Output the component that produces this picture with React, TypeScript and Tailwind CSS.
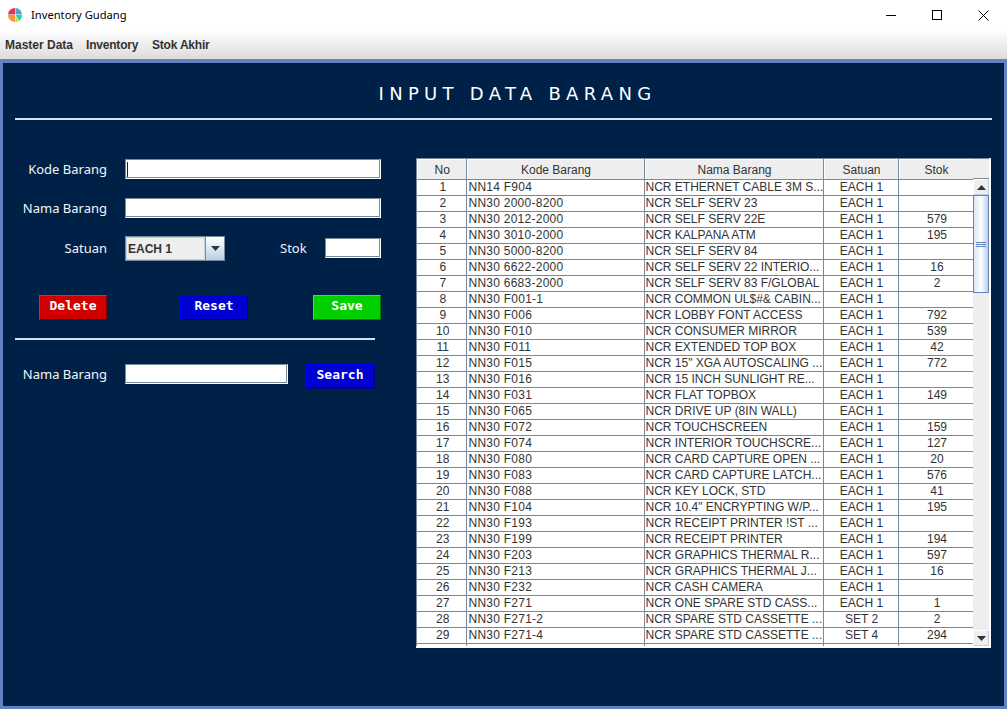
const ROWS: [number, string, string, string, string][] = [
  [1, 'NN14 F904', 'NCR ETHERNET CABLE 3M S...', 'EACH 1', ''],
  [2, 'NN30 2000-8200', 'NCR SELF SERV 23', 'EACH 1', ''],
  [3, 'NN30 2012-2000', 'NCR SELF SERV 22E', 'EACH 1', '579'],
  [4, 'NN30 3010-2000', 'NCR KALPANA ATM', 'EACH 1', '195'],
  [5, 'NN30 5000-8200', 'NCR SELF SERV 84', 'EACH 1', ''],
  [6, 'NN30 6622-2000', 'NCR SELF SERV 22 INTERIO...', 'EACH 1', '16'],
  [7, 'NN30 6683-2000', 'NCR SELF SERV 83 F/GLOBAL', 'EACH 1', '2'],
  [8, 'NN30 F001-1', 'NCR COMMON UL$#& CABIN...', 'EACH 1', ''],
  [9, 'NN30 F006', 'NCR LOBBY FONT ACCESS', 'EACH 1', '792'],
  [10, 'NN30 F010', 'NCR CONSUMER MIRROR', 'EACH 1', '539'],
  [11, 'NN30 F011', 'NCR EXTENDED TOP BOX', 'EACH 1', '42'],
  [12, 'NN30 F015', 'NCR 15" XGA AUTOSCALING ...', 'EACH 1', '772'],
  [13, 'NN30 F016', 'NCR 15 INCH SUNLIGHT RE...', 'EACH 1', ''],
  [14, 'NN30 F031', 'NCR FLAT TOPBOX', 'EACH 1', '149'],
  [15, 'NN30 F065', 'NCR DRIVE UP (8IN WALL)', 'EACH 1', ''],
  [16, 'NN30 F072', 'NCR TOUCHSCREEN', 'EACH 1', '159'],
  [17, 'NN30 F074', 'NCR INTERIOR TOUCHSCRE...', 'EACH 1', '127'],
  [18, 'NN30 F080', 'NCR CARD CAPTURE OPEN ...', 'EACH 1', '20'],
  [19, 'NN30 F083', 'NCR CARD CAPTURE LATCH...', 'EACH 1', '576'],
  [20, 'NN30 F088', 'NCR KEY LOCK, STD', 'EACH 1', '41'],
  [21, 'NN30 F104', 'NCR 10.4" ENCRYPTING W/P...', 'EACH 1', '195'],
  [22, 'NN30 F193', 'NCR RECEIPT PRINTER !ST ...', 'EACH 1', ''],
  [23, 'NN30 F199', 'NCR RECEIPT PRINTER', 'EACH 1', '194'],
  [24, 'NN30 F203', 'NCR GRAPHICS THERMAL R...', 'EACH 1', '597'],
  [25, 'NN30 F213', 'NCR GRAPHICS THERMAL J...', 'EACH 1', '16'],
  [26, 'NN30 F232', 'NCR CASH CAMERA', 'EACH 1', ''],
  [27, 'NN30 F271', 'NCR ONE SPARE STD CASS...', 'EACH 1', '1'],
  [28, 'NN30 F271-2', 'NCR SPARE STD CASSETTE ...', 'SET 2', '2'],
  [29, 'NN30 F271-4', 'NCR SPARE STD CASSETTE ...', 'SET 4', '294'],
]

const labelClass = "w-[92px] text-right text-[13px] text-[#f2f5fa] font-['Noto_Sans',sans-serif] leading-none"
const inputClass = 'h-[20px] bg-white border border-t-[#7a8a99] border-l-[#7a8a99] border-b-white border-r-white shadow-[inset_-1px_-1px_0_#7a8a99]'
const btnClass = "h-[25px] flex items-center justify-center pb-[3px] text-white font-bold text-[13px] font-['DejaVu_Sans_Mono',monospace] border"
const blueBtn = 'bg-[#0000d0] border-t-[#0000ff] border-l-[#0000ff] border-b-[#000080] border-r-[#000080]'

function AppIcon() {
  return (
    <svg width="16" height="16" viewBox="0 0 16 16">
      <path d="M8 7.5V1A7 7 0 0 0 1 7.5Z" fill="#d83a4c" />
      <path d="M8.5 7.5V1A7 7 0 0 1 15 7.5Z" fill="#4aa8c4" />
      <path d="M8.5 8H15A7 7 0 0 1 12.5 13.7Z" fill="#1fd0b0" />
      <path d="M8.5 8.5L12 13.7A7 7 0 0 1 8.5 15Z" fill="#c4dc3c" />
      <path d="M8 8V15A7 7 0 0 1 1 8Z" fill="#f59a3a" />
    </svg>
  )
}

function ScrollArrow({ down }: { down?: boolean }) {
  return (
    <div className="h-[16px] bg-[#eeeeee] border border-t-white border-l-white border-b-[#b8cfe5] border-r-[#b8cfe5] flex items-center justify-center">
      <svg width="9" height="5" viewBox="0 0 9 5">
        <path d={down ? 'M0 0H9L4.5 5Z' : 'M0 5H9L4.5 0Z'} fill="#333" />
      </svg>
    </div>
  )
}

export default function App() {
  return (
    <div className="w-[1007px] h-[709px] flex flex-col overflow-hidden bg-white font-['Liberation_Sans',sans-serif]">
      {/* Title bar */}
      <div className="h-[30px] flex items-center bg-white">
        <div className="ml-[7px] mr-[8px]"><AppIcon /></div>
        <span className="text-[11.2px] text-black font-['Noto_Sans',sans-serif]">Inventory Gudang</span>
        <div className="ml-auto flex items-center">
          <div className="w-[46px] flex justify-center">
            <div className="w-[10px] h-px bg-black" />
          </div>
          <div className="w-[46px] flex justify-center">
            <div className="w-[10px] h-[10px] border border-black" />
          </div>
          <div className="w-[46px] flex justify-center mr-[1px]">
            <svg width="11" height="11" viewBox="0 0 11 11">
              <path d="M0.5 0.5L10.5 10.5M10.5 0.5L0.5 10.5" stroke="#000" fill="none" />
            </svg>
          </div>
        </div>
      </div>

      {/* Menu bar */}
      <div className="h-[29px] flex items-center pl-[5px] pt-[1px] bg-gradient-to-b from-white to-[#dcdcdc] text-[12px] font-bold text-[#333333]">
        <span className="w-[81px]">Master Data</span>
        <span className="w-[66px] tracking-[-0.2px]">Inventory</span>
        <span className="tracking-[-0.2px]">Stok Akhir</span>
      </div>

      {/* Main panel */}
      <div className="flex-1 min-h-0 border-[3px] border-t-4 border-[#6382bf] bg-[#002147] flex flex-col">
        <div className="mx-[12px] h-[57px] border-b-2 border-[#d5e0f5] flex items-center justify-center pt-[6px] pl-[28px]">
          <span className="text-white text-[18px] tracking-[5.3px] font-['DejaVu_Sans',sans-serif]">INPUT DATA BARANG</span>
        </div>

        <div className="flex pl-[12px] pt-[39px]">
          {/* Form */}
          <div className="w-[401px] shrink-0 flex flex-col">
            <div className="flex items-center h-[20px]">
              <span className={labelClass}>Kode Barang</span>
              <div className={`${inputClass} ml-[18px] w-[256px] flex items-center pl-[1px]`}>
                <div className="w-[1px] h-[15px] bg-[#222222]" />
              </div>
            </div>
            <div className="flex items-center h-[20px] mt-[19px]">
              <span className={labelClass}>Nama Barang</span>
              <div className={`${inputClass} ml-[18px] w-[256px]`} />
            </div>
            <div className="flex items-center h-[25px] mt-[18px]">
              <span className={labelClass}>Satuan</span>
              <div className="ml-[18px] w-[100px] h-[25px] flex border border-[#7a8a99] bg-[#eeeeee]">
                <div className="flex-1 flex items-center pl-[1px] text-[12px] font-bold text-[#333333] border border-[#c4d2e2]">EACH 1</div>
                <div className="w-[19px] flex items-center justify-center bg-gradient-to-b from-white to-[#b8cfe5] border-l border-[#7a8a99]">
                  <svg width="9" height="5" viewBox="0 0 9 5"><path d="M0 0H9L4.5 5Z" fill="#333" /></svg>
                </div>
              </div>
              <span className="ml-[55px] w-[28px] text-[13px] leading-none text-[#f2f5fa] font-['Noto_Sans',sans-serif]">Stok</span>
              <div className={`${inputClass} ml-[17px] w-[56px] -mt-[1px]`} />
            </div>
            <div className="flex items-center ml-[24px] mt-[34px]">
              <div className={`${btnClass} w-[68px] bg-[#d00000] border-t-[#ff1a1a] border-l-[#ff1a1a] border-b-[#800000] border-r-[#800000]`}>Delete</div>
              <div className={`${btnClass} w-[68px] ml-[73px] ${blueBtn}`}>Reset</div>
              <div className={`${btnClass} w-[68px] ml-[65px] bg-[#00d000] border-t-[#1aff1a] border-l-[#1aff1a] border-b-[#008000] border-r-[#008000]`}>Save</div>
            </div>
            <div className="mt-[18px] w-[360px] h-[2px] bg-[#d5e0f5]" />
            <div className="flex items-start mt-[24px]">
              <span className={`${labelClass} mt-[4px]`}>Nama Barang</span>
              <div className={`${inputClass} ml-[18px] w-[163px]`} />
              <div className={`${btnClass} w-[69px] ml-[18px] pr-[1px] ${blueBtn}`}>Search</div>
            </div>
          </div>

          {/* Table */}
          <div className="w-[575px] h-[490px] -mt-[1px] bg-white border-r-2 border-b-2 border-white overflow-hidden flex text-[12px] text-[#333333]">
            <div className="w-[557px] h-[488px] overflow-hidden border-l border-t border-[#7a8a99]">
              <table className="table-fixed border-collapse w-[556px]">
                <colgroup>
                  <col className="w-[49px]" />
                  <col className="w-[178px]" />
                  <col className="w-[179px]" />
                  <col className="w-[75px]" />
                  <col className="w-[75px]" />
                </colgroup>
                <thead>
                  <tr className="h-[20px] bg-[#eeeeee]">
                    {['No', 'Kode Barang', 'Nama Barang', 'Satuan', 'Stok'].map((h) => (
                      <th key={h} className="p-0 pt-[2px] pl-[2px] font-normal text-center leading-none border-r border-b border-[#7a8a99] shadow-[inset_1px_1px_0_#fff]">{h}</th>
                    ))}
                  </tr>
                </thead>
                <tbody>
                  {ROWS.map(([no, kode, nama, satuan, stok]) => (
                    <tr key={no} className="h-[16px]">
                      <td className="p-0 pl-[3px] leading-none text-center border-r border-b border-[#7a8a99]">{no}</td>
                      <td className="p-0 pl-[2px] leading-none tracking-[0.25px] border-r border-b border-[#7a8a99] whitespace-nowrap">{kode}</td>
                      <td className="p-0 pl-[1px] leading-none border-r border-b border-[#7a8a99] whitespace-nowrap overflow-hidden">{nama}</td>
                      <td className="p-0 pl-[2px] leading-none text-center border-r border-b border-[#7a8a99]">{satuan}</td>
                      <td className="p-0 pl-[3px] leading-none text-center border-r border-b border-[#7a8a99]">{stok}</td>
                    </tr>
                  ))}
                  <tr className="h-[16px]">
                    <td className="p-0 border-r border-[#7a8a99]" />
                    <td className="p-0 border-r border-[#7a8a99]" />
                    <td className="p-0 border-r border-[#7a8a99]" />
                    <td className="p-0 border-r border-[#7a8a99]" />
                    <td className="p-0 border-r border-[#7a8a99]" />
                  </tr>
                </tbody>
              </table>
            </div>

            {/* Scrollbar */}
            <div className="w-[16px] h-[488px] flex flex-col border-t border-[#7a8a99] bg-[#eeeeee]">
              <div className="h-[20px] bg-[#eeeeee] border-b border-[#7a8a99]" />
              <ScrollArrow />
              <div className="flex-1 flex flex-col bg-[#eeeeee]">
                <div className="h-[98px] bg-gradient-to-r from-[#dbe6f3] via-white to-[#b8cfe5] border border-[#6382bf] flex flex-col items-center justify-center gap-[1px]">
                  <div className="w-[10px] h-px bg-[#6382bf]" />
                  <div className="w-[10px] h-px bg-[#6382bf]" />
                  <div className="w-[10px] h-px bg-[#6382bf]" />
                </div>
              </div>
              <ScrollArrow down />
            </div>
          </div>
        </div>
      </div>
    </div>
  )
}
